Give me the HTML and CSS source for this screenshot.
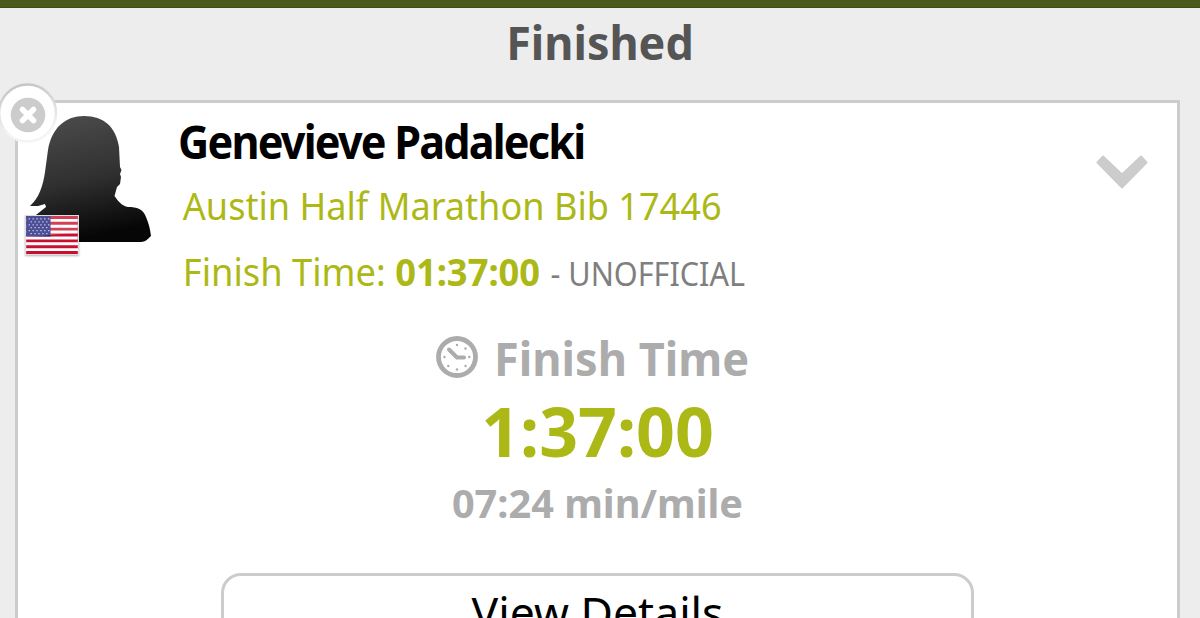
FILE: index.html
```html
<!DOCTYPE html>
<html lang="en">
<head>
    <meta charset="UTF-8">
    <meta name="viewport" content="width=device-width, initial-scale=1.0">
    <title>Athlete Tracking</title>
    <link rel="stylesheet" href="styles.css">
</head>
<body>
    <div class="top-bar"></div>

    <header>
        <h1>Finished</h1>
    </header>

    <main class="card">
        <button class="close" aria-label="Remove">
            <svg viewBox="0 0 60 60">
                <defs>
                    <linearGradient id="ring" x1="0.4" y1="0" x2="0.6" y2="1">
                        <stop offset="0" stop-color="#c6c6c6"/>
                        <stop offset="0.35" stop-color="#d8d8d8"/>
                        <stop offset="0.8" stop-color="#f4f4f4"/>
                    </linearGradient>
                </defs>
                <circle cx="29.5" cy="30" r="28.5" fill="#fff" stroke="url(#ring)" stroke-width="2.6"/>
                <circle cx="30" cy="32" r="17.3" fill="#ccc"/>
                <path d="M24.5 26.5l11 11M35.5 26.5l-11 11" stroke="#fff" stroke-width="5.6" stroke-linecap="round"/>
            </svg>
        </button>

        <div class="athlete">
            <div class="avatar">
                <svg class="silhouette" viewBox="0 0 122 127">
                    <defs>
                        <linearGradient id="shade" x1="0.35" y1="0" x2="0.55" y2="1">
                            <stop offset="0" stop-color="#4a4a4a"/>
                            <stop offset="0.5" stop-color="#303030"/>
                            <stop offset="0.95" stop-color="#060606"/>
                        </linearGradient>
                    </defs>
                    <path fill="url(#shade)" d="M0 90C9 82 13 70 15 56L18 34C22 11 36 0 54 0C74 0 86 11 89 31L90 51L91.5 54L90 58L91 61L90 68L87 71L84.5 80C88 85 92 90 98 91C107 91 113 93 116 101C119 108 120 113 121 120C118 123 115 126 111 126L10 126L6 99L16 91L15 88L8 90Z"/>
                </svg>
                <svg class="flag" viewBox="0 0 53 39">
                    <rect width="53" height="39" fill="#fff"/>
                    <path d="M0 1.5H53M0 7.5H53M0 13.5H53M0 19.5H53M0 25.5H53M0 31.5H53M0 37.5H53" stroke="#c8102e" stroke-width="3"/>
                    <rect width="25" height="21" fill="#20227c"/>
                    <path d="M2.5 3H24M4.5 6H23M2.5 9H24M4.5 12H23M2.5 15H24M4.5 18H23" stroke="#c3c4e2" stroke-width="1.3" stroke-dasharray="1.3 2.7"/>
                    <path d="M0 0H53V17L0 22Z" fill="#fff" opacity="0.2"/>
                </svg>
            </div>
            <div class="info">
                <h2>Genevieve Padalecki</h2>
                <p class="event">Austin Half Marathon Bib 17446</p>
                <p class="finish">Finish Time: <strong>01:37:00</strong> <small>- UNOFFICIAL</small></p>
            </div>
            <svg class="chevron" viewBox="0 0 52 34">
                <path d="M7 1.5L1.5 7.5L26 32.5L50.5 7.5L45 1.5L26 19.5Z" fill="#ccc" stroke="#ccc" stroke-width="2" stroke-linejoin="round"/>
            </svg>
        </div>

        <section class="result">
            <div class="result-title">
                <svg viewBox="0 0 42 42">
                    <circle cx="21" cy="21" r="18.5" fill="none" stroke="#acacac" stroke-width="4.8"/>
                    <path d="M13 13.5L21 21.5H28" fill="none" stroke="#acacac" stroke-width="4" stroke-linecap="round" stroke-linejoin="round"/>
                    <g fill="#acacac">
                        <circle cx="21" cy="9" r="1.2"/>
                        <circle cx="29.5" cy="12.5" r="1.2"/>
                        <circle cx="33.3" cy="21" r="1.2"/>
                        <circle cx="29.5" cy="30" r="1.2"/>
                        <circle cx="21" cy="33.5" r="1.2"/>
                        <circle cx="12.3" cy="30" r="1.2"/>
                        <circle cx="8.5" cy="21" r="1.2"/>
                    </g>
                </svg>
                <span>Finish Time</span>
            </div>
            <div class="result-time">1:37:00</div>
            <div class="result-pace">07:24 min/mile</div>
            <a class="details" href="#details">View Details</a>
        </section>
    </main>
</body>
</html>
```

FILE: styles.css
```css
* {
    margin: 0;
    padding: 0;
    box-sizing: border-box;
}

body {
    height: 618px;
    overflow: hidden;
    font-family: "Noto Sans", "Open Sans", sans-serif;
    background: #ededed;
    color: #000;
}

svg {
    display: block;
}

/* Header */
.top-bar {
    height: 8px;
    background: #4b5b1e;
    border-bottom: 1px solid #3f4e14;
}

header {
    height: 92px;
    text-align: center;
}

h1 {
    font-size: 47px;
    line-height: 69px;
    color: #555;
    transform: scaleX(0.955);
}

/* Athlete card */
.card {
    position: relative;
    margin: 0 20px 0 15px;
    height: 518px;
    background: #fff;
    border: 3px solid #ccc;
    border-bottom: none;
}

.close {
    position: absolute;
    top: -20px;
    left: -20px;
    width: 60px;
    height: 60px;
    background: none;
    border: none;
}

.athlete {
    display: flex;
    align-items: flex-start;
    padding: 8px 29px 0 6px;
}

.avatar {
    position: relative;
    width: 155px;
}

.silhouette {
    width: 122px;
    height: 127px;
    margin: 5px 0 0 6px;
}

.flag {
    position: absolute;
    left: 1px;
    top: 104px;
    width: 54px;
    height: 40px;
    border: 1px solid #ddd;
    box-shadow: 0 1px 2px rgba(0, 0, 0, 0.3);
}

.info {
    flex: 1;
    white-space: nowrap;
}

/* Slightly narrowed type */
h2,
.event,
.finish,
.result-title span {
    transform-origin: left;
}

h2 {
    margin-left: -1px;
    font-size: 46px;
    line-height: 61px;
    letter-spacing: -1.9px;
    transform: scaleX(0.938);
}

.event,
.finish {
    padding-left: 4px;
    font-size: 38px;
    line-height: 66px;
    color: #acb816;
    transform: scaleX(0.95);
}

.finish {
    transform: scaleX(0.955);
}

.finish small {
    margin-left: 1px;
    font-size: 32px;
    color: #7f7f7f;
}

.chevron {
    width: 52px;
    height: 34px;
    margin-top: 44px;
}

/* Result */
.result {
    padding-top: 21px;
    text-align: center;
    font-weight: bold;
    color: #acacac;
}

.result-title {
    display: flex;
    align-items: center;
    justify-content: center;
    gap: 15px;
    margin-left: -2px;
    font-size: 46.5px;
    line-height: 60px;
}

.result-title svg {
    width: 42px;
    height: 42px;
    margin-bottom: 2px;
}

.result-title span {
    margin-left: 1px;
    transform: scaleX(0.97);
}

.result-time {
    font-size: 69px;
    line-height: 84px;
    color: #acb816;
    transform: scaleX(0.985);
}

.result-pace {
    font-size: 40px;
    line-height: 61px;
    transform: scaleX(0.992);
}

.details {
    display: block;
    width: 753px;
    height: 90px;
    margin: 40px auto 0;
    border: 3px solid #ccc;
    border-radius: 20px;
    font-size: 44.5px;
    font-weight: normal;
    line-height: 72px;
    color: #000;
    text-decoration: none;
}
```
